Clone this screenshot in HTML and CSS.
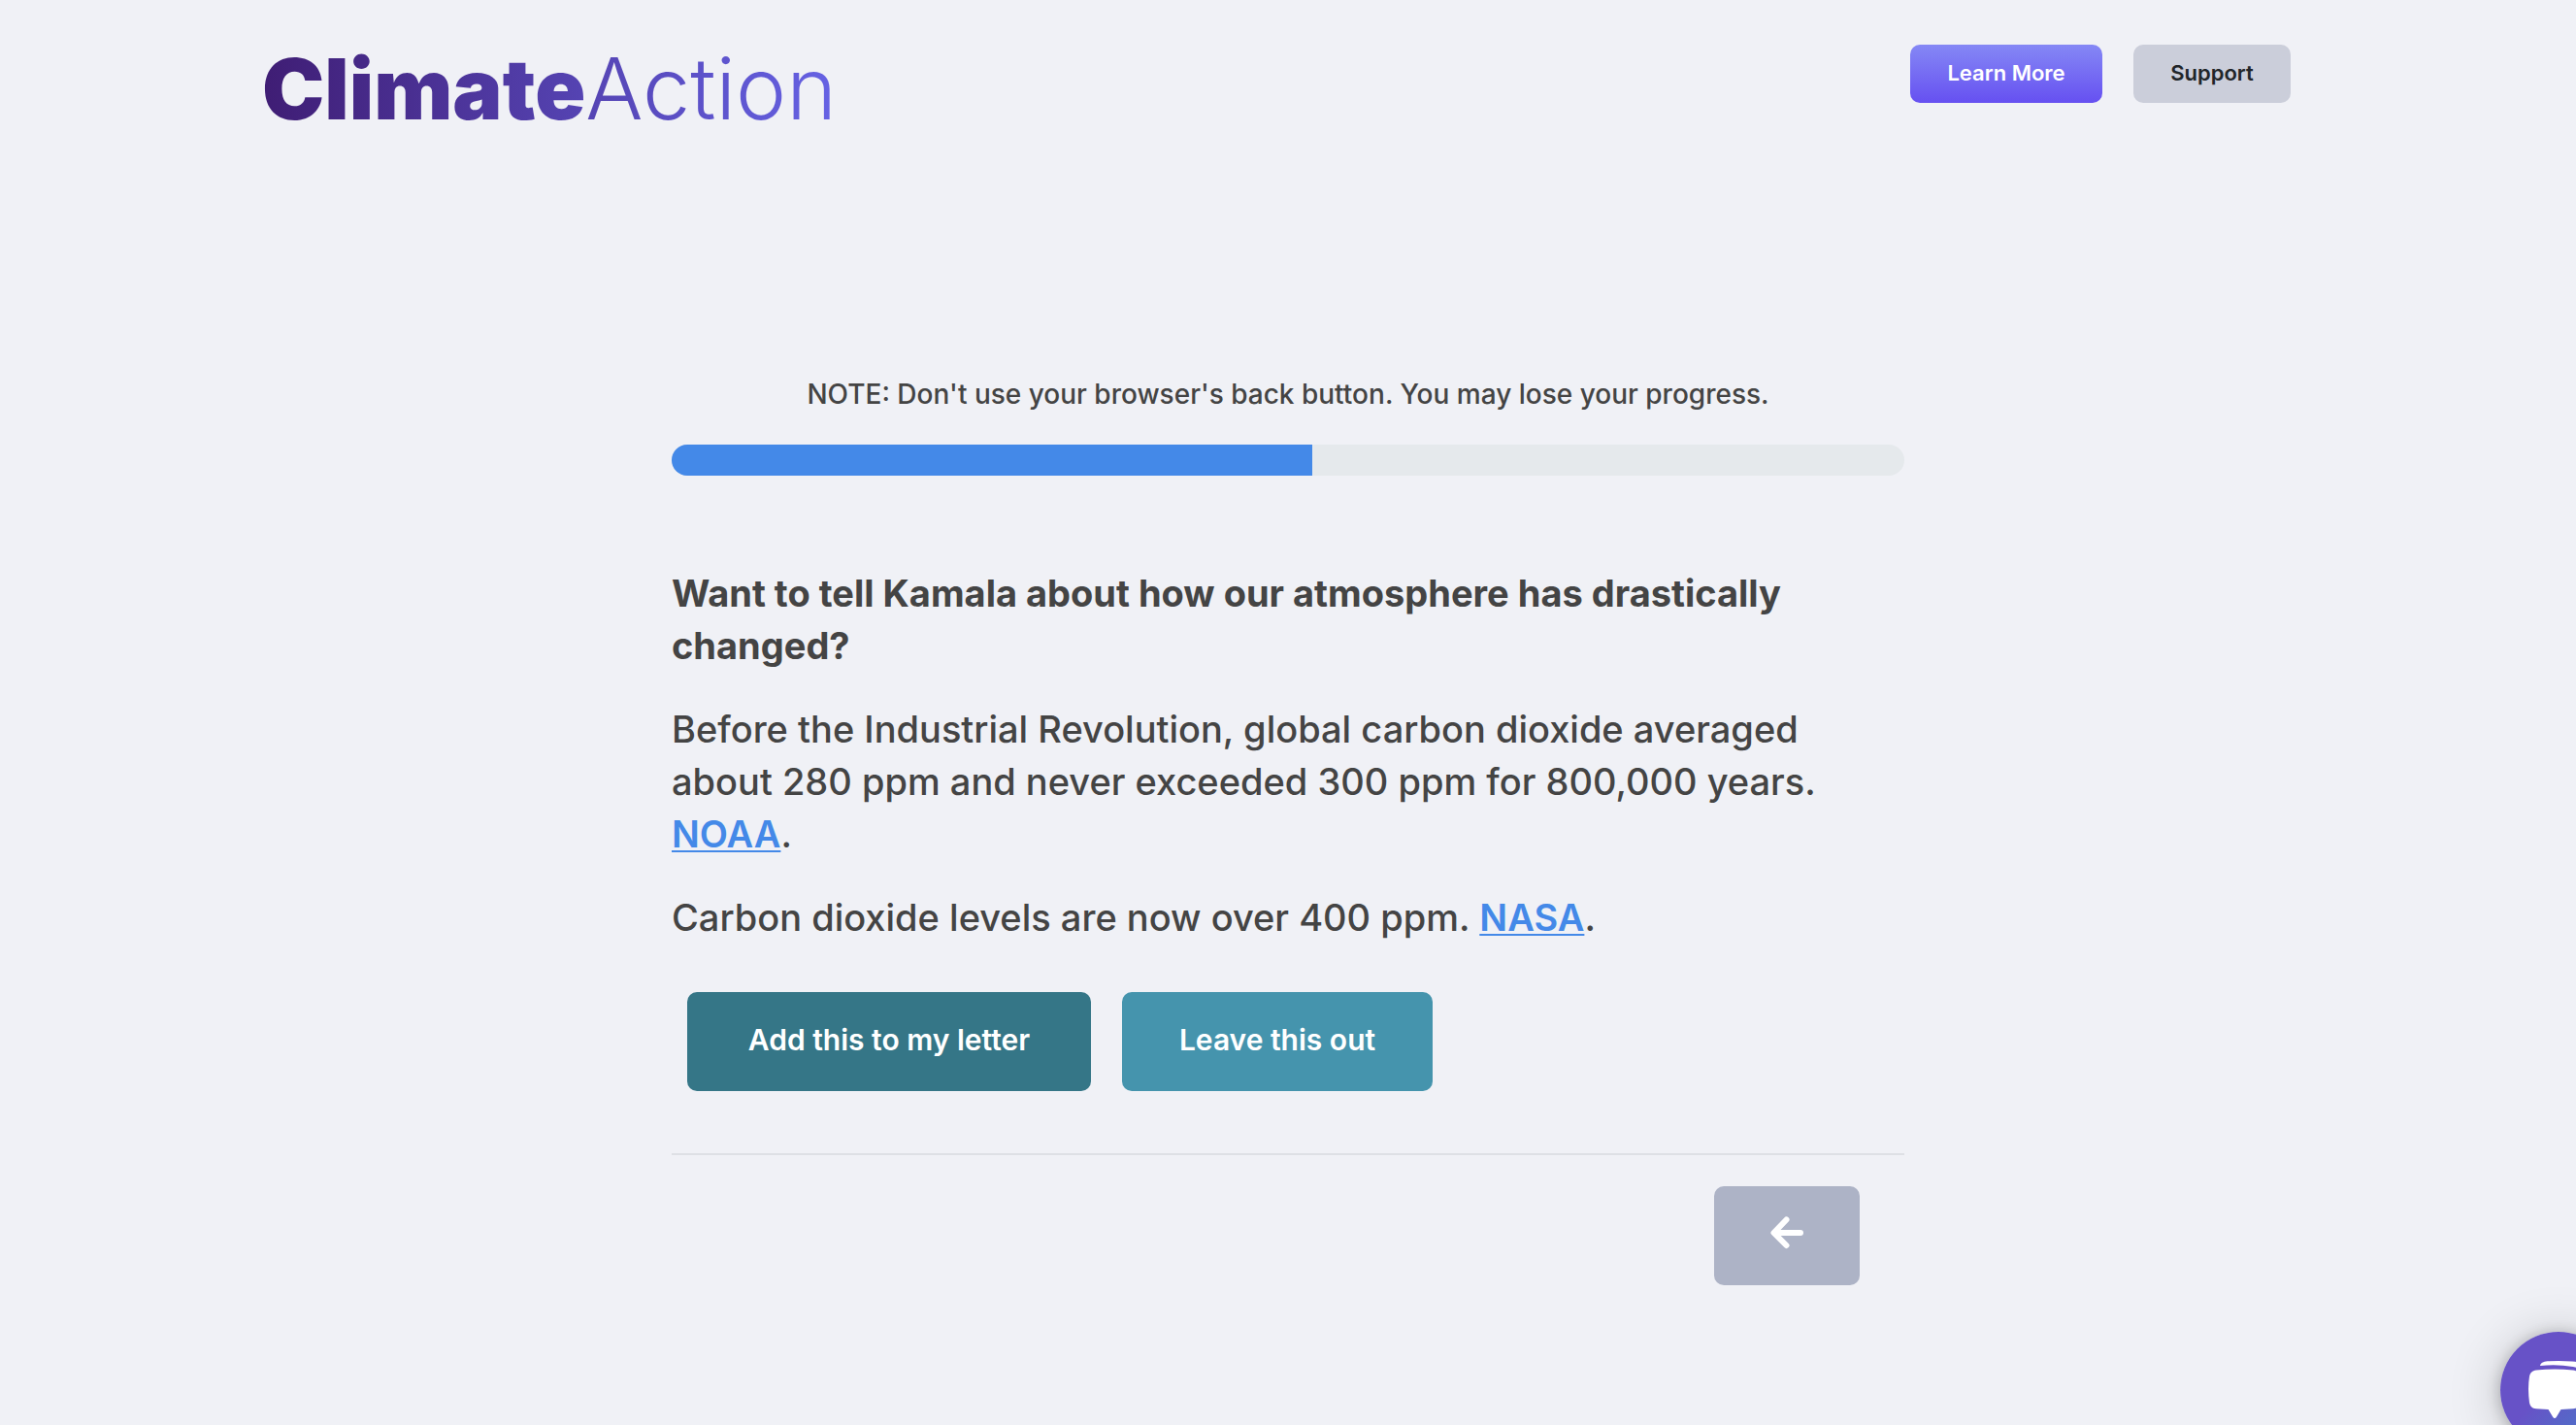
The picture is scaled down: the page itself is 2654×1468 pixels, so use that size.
FILE: index.html
```html
<!DOCTYPE html>
<html lang="en">
<head>
  <meta charset="utf-8">
  <meta name="viewport" content="width=device-width, initial-scale=1">
  <title>ClimateAction</title>
  <link rel="stylesheet" href="styles.css">
</head>
<body>
  <header class="site-header">
    <a class="logo" href="#"><span class="logo-bold">Climate</span><span class="logo-light">Action</span></a>
    <nav class="site-nav">
      <a class="nav-button nav-primary" href="#">Learn More</a>
      <a class="nav-button nav-secondary" href="#">Support</a>
    </nav>
  </header>

  <main class="survey">
    <p class="note">NOTE: Don't use your browser's back button. You may lose your progress.</p>
    <div class="progress" role="progressbar" aria-label="Progress" aria-valuemin="0" aria-valuemax="100" aria-valuenow="52">
      <div class="progress-fill" style="width: 52%"></div>
    </div>

    <section class="question">
      <h1 class="question-title">Want to tell Kamala about how our atmosphere has drastically changed?</h1>
      <p>Before the Industrial Revolution, global carbon dioxide averaged about 280 ppm and never exceeded 300 ppm for 800,000 years. <a href="#">NOAA</a>.</p>
      <p>Carbon dioxide levels are now over 400 ppm. <a href="#">NASA</a>.</p>
    </section>

    <div class="choices">
      <button class="choice choice-add" type="button">Add this to my letter</button>
      <button class="choice choice-skip" type="button">Leave this out</button>
    </div>

    <footer class="survey-footer">
      <button class="back-button" type="button" aria-label="Back">
        <svg width="34" height="34" viewBox="0 0 34 34" fill="none" stroke="#fff" stroke-width="6" stroke-linecap="round" stroke-linejoin="round"><path d="M16.500 3.500L3.500 17L16.500 30"/><path d="M5 17H31"/></svg>
      </button>
    </footer>
  </main>

  <button class="chat-button" type="button" aria-label="Open chat">
    <svg width="120" height="120" viewBox="0 0 120 120" fill="#fff"><path d="M41 35C42 31 46 30.500 50 30.300Q61 29.500 74 30.500C83 31 88 34 89 43V58Q86 62 85 62V47C84 39 81 37 75 36Q58 33 41 35Z"/><path d="M37 39.500Q56 37.500 75 39.500C79 40 82 42 82.500 47Q84 58 82 73C81 77 79 79 75 79.200L62.500 80L58 87.500Q56 90.500 54 87.500L49.500 80L37 79.200C33 79 31 77 30 73Q28 58 30 46C31 42 33 40 37 39.500Z"/></svg>
  </button>
</body>
</html>
```
FILE: styles.css
```css
* {
  box-sizing: border-box;
}

body {
  margin: 0;
  min-height: 100vh;
  background: #f0f1f6;
  color: #444;
  font-family: "Inter", "Liberation Sans", sans-serif;
  font-weight: 500;
}

.site-header {
  display: flex;
  justify-content: space-between;
  align-items: flex-start;
  max-width: 2114px;
  margin: 0 auto;
  padding: 46px 24px 0 0;
}

.logo {
  font-size: 86px;
  line-height: 90px;
  text-decoration: none;
  color: transparent;
  background: linear-gradient(90deg, #3f1d74, #6662e4);
  -webkit-background-clip: text;
  background-clip: text;
}

.logo-bold {
  font-weight: 900;
}

.logo-light {
  font-size: 88px;
  font-weight: 300;
}

.site-nav {
  display: flex;
  gap: 32px;
}

.nav-button {
  height: 60px;
  padding: 0 36px;
  border-radius: 10px;
  font-size: 22px;
  font-weight: 600;
  line-height: 58px;
  text-align: center;
  text-decoration: none;
}

.nav-primary {
  min-width: 198px;
  background: linear-gradient(#8588f5, #6650f1);
  color: #fff;
}

.nav-secondary {
  min-width: 162px;
  background: #cbceda;
  color: #212529;
}

.survey {
  max-width: 1270px;
  margin: 248px auto 0;
}

.note {
  margin: 0;
  font-size: 28px;
  line-height: 42px;
  text-align: center;
}

.progress {
  height: 32px;
  margin: 31px 0 94px;
  border-radius: 16px;
  background: #e5e9ec;
  overflow: hidden;
}

.progress-fill {
  height: 100%;
  background: #4489e8;
}

.question {
  font-size: 38px;
  line-height: 54px;
}

.question p {
  margin: 32px 0 0;
}

.question a {
  color: #4489e8;
  font-weight: 600;
  text-decoration-thickness: 2px;
  text-underline-offset: 3px;
}

.question-title {
  margin: 0;
  font-size: 38px;
  font-weight: 700;
  line-height: 54px;
}

.choices {
  display: flex;
  gap: 32px;
  margin: 50px 16px 64px;
}

.choice {
  height: 102px;
  padding-bottom: 4px;
  border: 0;
  border-radius: 10px;
  color: #fff;
  font-family: inherit;
  font-size: 30px;
  font-weight: 600;
  line-height: 45px;
}

.choice-add {
  min-width: 416px;
  background: #357687;
}

.choice-skip {
  min-width: 320px;
  background: #4594ad;
}

.survey-footer {
  display: flex;
  justify-content: flex-end;
  padding: 32px 46px;
  border-top: 2px solid #dee0e5;
}

.back-button {
  display: flex;
  justify-content: center;
  align-items: flex-start;
  width: 150px;
  height: 102px;
  padding: 31px 0 0;
  border: 0;
  border-radius: 10px;
  background: #adb3c6;
}

.chat-button {
  position: fixed;
  right: -42px;
  bottom: -24px;
  width: 120px;
  height: 120px;
  padding: 0;
  border: 0;
  border-radius: 50%;
  background: linear-gradient(135deg, #6752c7 45%, #3f83c9);
  box-shadow: 0 2px 16px rgba(0, 0, 0, 0.25), 0 4px 56px rgba(0, 0, 0, 0.2);
}
```
